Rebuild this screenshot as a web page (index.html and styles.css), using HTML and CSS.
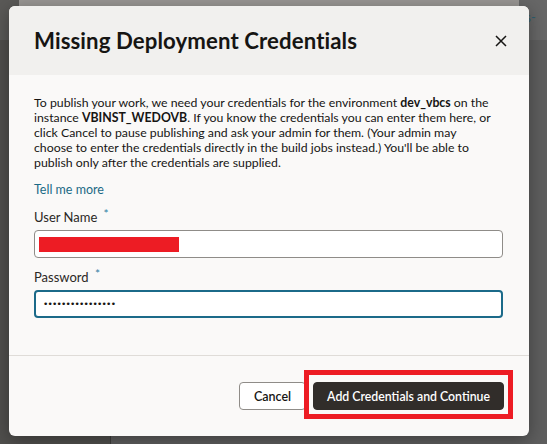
FILE: index.html
```html
<!DOCTYPE html>
<html>
<head>
<meta charset="utf-8">
<link rel="stylesheet" href="styles.css">
</head>
<body>
<div class="app">
  <div class="topbar">
    <div class="top-left"></div>
    <div class="top-main"></div>
    <div class="top-right"><span class="peek">ns-</span></div>
  </div>
  <div class="lower">
    <div class="low-left"></div>
    <div class="low-main"></div>
  </div>
</div>

<div class="dialog" role="dialog">
  <div class="dlg-header">
    <h1 class="dlg-title">Missing Deployment Credentials</h1>
    <span class="close" aria-label="Close">
      <svg width="12" height="12" viewBox="0 0 12 12"><path d="M1 1 L11 11 M11 1 L1 11" stroke="#161513" stroke-width="1.5" fill="none"/></svg>
    </span>
  </div>
  <div class="dlg-body">
    <p class="intro">To publish your work, we need your credentials for the environment <b>dev_vbcs</b> on the<br>instance <b>VBINST_WEDOVB</b>. If you know the credentials you can enter them here, or<br>click Cancel to pause publishing and ask your admin for them. (Your admin may<br>choose to enter the credentials directly in the build jobs instead.) You'll be able to<br>publish only after the credentials are supplied.</p>
    <a class="link" href="#">Tell me more</a>
    <div class="field first">
      <div class="label">User Name <span class="req">*</span></div>
      <div class="input"><span class="redact"></span></div>
    </div>
    <div class="field">
      <div class="label">Password <span class="req">*</span></div>
      <div class="input focused"><span class="dots">••••••••••••••••</span></div>
    </div>
  </div>
  <div class="dlg-footer">
    <button class="btn btn-outline">Cancel</button>
    <span class="highlight">
      <button class="btn btn-primary">Add Credentials and Continue</button>
    </span>
  </div>
</div>
</body>
</html>
```
FILE: styles.css
```css
html, body {
  margin: 0;
  padding: 0;
}
body {
  width: 547px;
  height: 444px;
  overflow: hidden;
  position: relative;
  font-family: Lato, "Noto Sans", sans-serif;
  color: #161513;
  background: #5d5c5a;
}
.app {
  display: flex;
  flex-direction: column;
  height: 100%;
}
.topbar {
  display: flex;
  height: 40px;
}
.top-left {
  width: 19px;
  background: #5a5957;
}
.top-main {
  flex: 1;
  background: #9a9794;
}
.top-right {
  width: 28px;
  background: #676767;
  overflow: hidden;
  white-space: nowrap;
}
.peek {
  display: block;
  margin: 9px 0 0 -1px;
  font-size: 13px;
  color: #2c5f72;
}
.lower {
  flex: 1;
  display: flex;
}
.low-left {
  width: 110px;
  background: #504f4d;
  border-right: 1px solid #3e3d3b;
}
.low-main {
  flex: 1;
  background: #5e5e5e;
}

.dialog {
  position: absolute;
  left: 9px;
  top: 6px;
  width: 520px;
  height: 430px;
  border-radius: 6px;
  background: #faf9f8;
  box-shadow: 0 4px 18px rgba(0,0,0,0.35);
  display: flex;
  flex-direction: column;
}
.dlg-header {
  height: 69px;
  flex: none;
  background: #f1f0ee;
  border-radius: 6px 6px 0 0;
  display: flex;
  align-items: center;
  justify-content: space-between;
  padding: 0 22px 0 25px;
  box-sizing: border-box;
}
.dlg-title {
  margin: 0;
  font-size: 22.2px;
  font-weight: 700;
  letter-spacing: 0.1px;
  color: #161513;
}
.close {
  display: flex;
  width: 12px;
  height: 12px;
}
.dlg-body {
  flex: 1;
  padding: 20px 26px 0 25px;
  box-sizing: border-box;
  display: flex;
  flex-direction: column;
}
.intro {
  margin: 0;
  font-size: 12.3px;
  line-height: 15px;
  color: #161513;
}
.intro b {
  font-weight: 700;
}
.link {
  margin-top: 12px;
  font-size: 12.5px;
  line-height: 15px;
  color: #1b6a86;
  text-decoration: none;
  align-self: flex-start;
}
.field {
  margin-top: 11px;
  display: flex;
  flex-direction: column;
}
.field.first {
  margin-top: 12px;
}
.label {
  font-size: 13px;
  line-height: 16px;
  height: 16px;
  color: #2b2825;
  margin-bottom: 5px;
}
.req {
  position: relative;
  top: -4px;
  font-size: 12px;
  color: #2f7fa5;
  margin-left: 3px;
}
.input {
  height: 28px;
  box-sizing: border-box;
  background: #fff;
  border: 1px solid #8f8c88;
  border-radius: 4px;
  display: flex;
  align-items: center;
  padding-left: 4px;
}
.input.focused {
  border: 2px solid #1b6a89;
  padding-left: 7px;
}
.redact {
  display: block;
  width: 140px;
  height: 15px;
  background: #ed1c24;
}
.dots {
  font-family: "DejaVu Sans", sans-serif;
  font-size: 9px;
  color: #161513;
  letter-spacing: -0.8px;
  line-height: 1;
}
.dlg-footer {
  flex: none;
  border-top: 1px solid #dfdcd8;
  padding: 26px 25px 26px 0;
  display: flex;
  justify-content: flex-end;
  align-items: center;
  gap: 7px;
}
.btn {
  height: 28px;
  box-sizing: border-box;
  border-radius: 4px;
  font-family: Lato, "Noto Sans", sans-serif;
  font-size: 12.5px;
  font-weight: 600;
  padding: 0 14px;
  white-space: nowrap;
  cursor: pointer;
}
.btn-outline {
  background: #fff;
  border: 1px solid #8f8c88;
  color: #161513;
}
.btn-primary {
  background: #312d2a;
  border: 1px solid #312d2a;
  color: #fff;
  padding: 0 13px;
  font-size: 12.3px;
}
.highlight {
  position: relative;
  display: flex;
}
.highlight::after {
  content: "";
  position: absolute;
  left: -9px;
  right: -9px;
  top: -12px;
  bottom: -9px;
  border: 5px solid #ed1c24;
  pointer-events: none;
}
```
